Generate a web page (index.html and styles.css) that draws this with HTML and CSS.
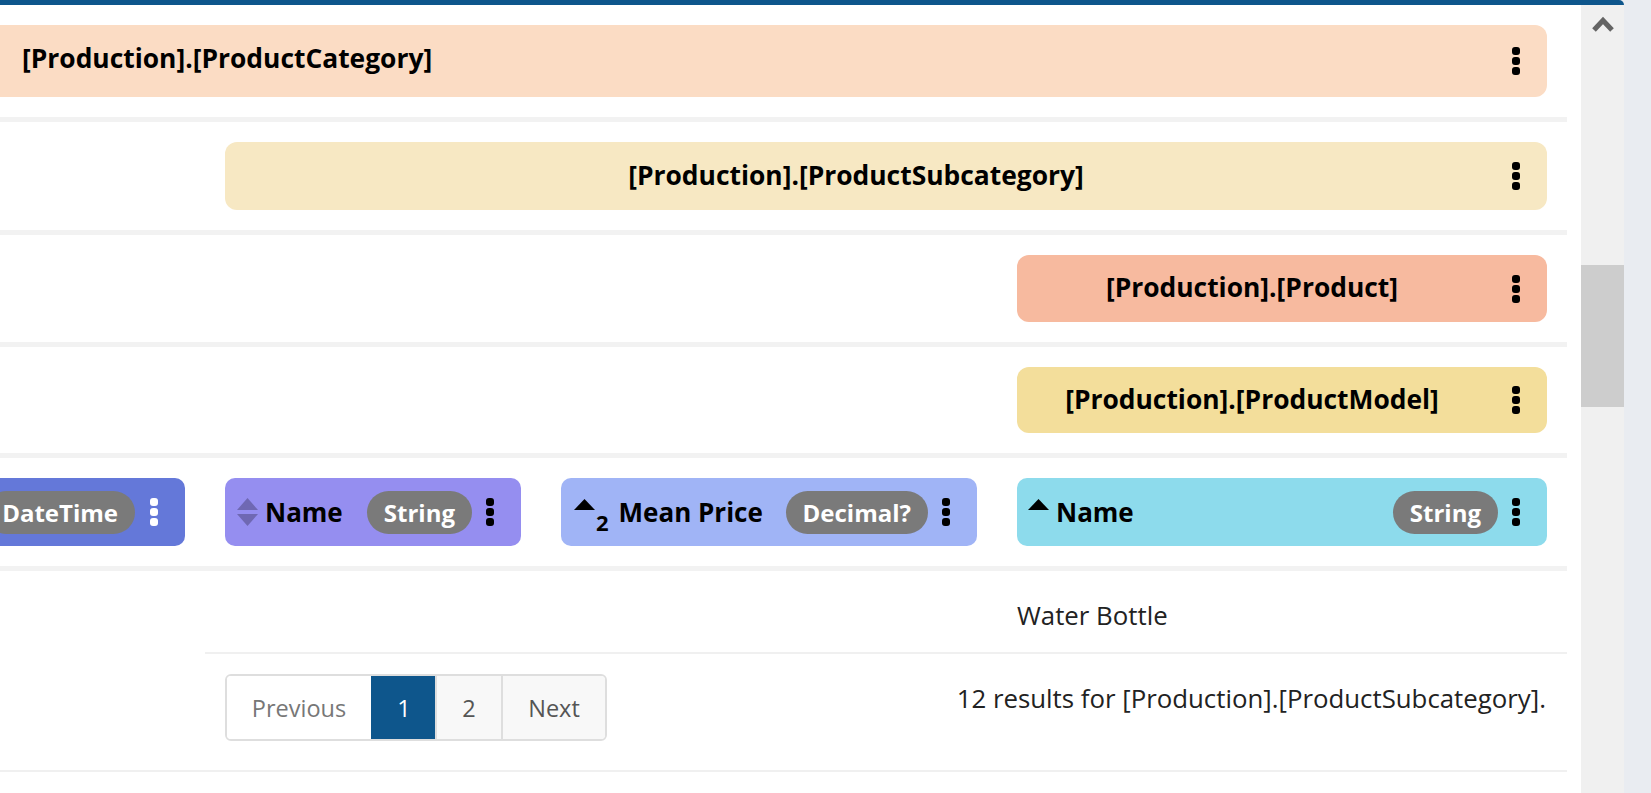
FILE: index.html
```html
<!DOCTYPE html>
<html>
<head>
<meta charset="utf-8">
<link rel="stylesheet" href="styles.css">
</head>
<body>
<div class="window">
  <div class="content">
    <div class="row">
      <div class="bar bar-cat span-all">
        <span class="bar-title left">[Production].[ProductCategory]</span>
        <svg class="kebab" width="8" height="28" viewBox="0 0 8 28"><rect x="0" y="0" width="8" height="8" rx="3"/><rect x="0" y="10" width="8" height="8" rx="3"/><rect x="0" y="20" width="8" height="8" rx="3"/></svg>
      </div>
    </div>
    <div class="row">
      <div class="bar bar-sub span-from2">
        <span class="bar-title">[Production].[ProductSubcategory]</span>
        <svg class="kebab" width="8" height="28" viewBox="0 0 8 28"><rect x="0" y="0" width="8" height="8" rx="3"/><rect x="0" y="10" width="8" height="8" rx="3"/><rect x="0" y="20" width="8" height="8" rx="3"/></svg>
      </div>
    </div>
    <div class="row">
      <div class="bar bar-prod span-last">
        <span class="bar-title">[Production].[Product]</span>
        <svg class="kebab" width="8" height="28" viewBox="0 0 8 28"><rect x="0" y="0" width="8" height="8" rx="3"/><rect x="0" y="10" width="8" height="8" rx="3"/><rect x="0" y="20" width="8" height="8" rx="3"/></svg>
      </div>
    </div>
    <div class="row">
      <div class="bar bar-model span-last">
        <span class="bar-title">[Production].[ProductModel]</span>
        <svg class="kebab" width="8" height="28" viewBox="0 0 8 28"><rect x="0" y="0" width="8" height="8" rx="3"/><rect x="0" y="10" width="8" height="8" rx="3"/><rect x="0" y="20" width="8" height="8" rx="3"/></svg>
      </div>
    </div>
    <div class="row">
      <div class="col-head head-date">
        <span class="pill">DateTime</span>
        <svg class="kebab white" width="8" height="28" viewBox="0 0 8 28"><rect x="0" y="0" width="8" height="8" rx="3"/><rect x="0" y="10" width="8" height="8" rx="3"/><rect x="0" y="20" width="8" height="8" rx="3"/></svg>
      </div>
      <div class="col-head head-name">
        <svg class="sort-both" width="21" height="29" viewBox="0 0 21 29"><polygon points="10.5,0 21,12 0,12"/><polygon points="0,16 21,16 10.5,28"/></svg>
        <span class="head-title">Name</span>
        <span class="pill">String</span>
        <svg class="kebab" width="8" height="28" viewBox="0 0 8 28"><rect x="0" y="0" width="8" height="8" rx="3"/><rect x="0" y="10" width="8" height="8" rx="3"/><rect x="0" y="20" width="8" height="8" rx="3"/></svg>
      </div>
      <div class="col-head head-price">
        <svg class="sort-asc" width="21" height="11" viewBox="0 0 21 11"><polygon points="10.5,0 21,11 0,11"/></svg>
        <span class="sort-order">2</span>
        <span class="head-title">Mean Price</span>
        <span class="pill">Decimal?</span>
        <svg class="kebab" width="8" height="28" viewBox="0 0 8 28"><rect x="0" y="0" width="8" height="8" rx="3"/><rect x="0" y="10" width="8" height="8" rx="3"/><rect x="0" y="20" width="8" height="8" rx="3"/></svg>
      </div>
      <div class="col-head head-pname">
        <svg class="sort-asc" width="21" height="11" viewBox="0 0 21 11"><polygon points="10.5,0 21,11 0,11"/></svg>
        <span class="head-title">Name</span>
        <span class="pill">String</span>
        <svg class="kebab" width="8" height="28" viewBox="0 0 8 28"><rect x="0" y="0" width="8" height="8" rx="3"/><rect x="0" y="10" width="8" height="8" rx="3"/><rect x="0" y="20" width="8" height="8" rx="3"/></svg>
      </div>
    </div>
    <div class="row data-row">
      <div class="cell span-last">Water Bottle</div>
    </div>
    <div class="footer-wrap">
      <div class="footer">
        <nav class="pager">
          <span class="page-item disabled">Previous</span>
          <span class="page-item active">1</span>
          <span class="page-item">2</span>
          <span class="page-item">Next</span>
        </nav>
        <span class="results">12 results for [Production].[ProductSubcategory].</span>
      </div>
    </div>
  </div>
  <div class="vscroll">
    <div class="sb-arrow">
      <svg width="22" height="18" viewBox="0 0 22 18"><polyline points="2,15 11,5.5 20,15" fill="none" stroke="#646464" stroke-width="5"/></svg>
    </div>
    <div class="sb-thumb"></div>
  </div>
</div>
</body>
</html>
```

FILE: styles.css
```css
html, body {
  margin: 0;
  padding: 0;
}
body {
  background: #e9ecf1;
  font-family: "Open Sans", "Noto Sans", sans-serif;
  color: #222;
  width: 1651px;
  height: 793px;
  overflow: hidden;
}
.window {
  width: 1624px;
  height: 788px;
  border-top: 5px solid #0e568c;
  border-top-right-radius: 5px;
  display: flex;
  background: #fff;
}
.content {
  width: 1581px;
  flex: 0 0 1581px;
  overflow: hidden;
  background: #fff;
}
.row {
  width: 1567px;
  box-sizing: border-box;
  padding: 20px 20px 20px 0;
  border-bottom: 5px solid #f2f2f2;
  display: grid;
  grid-template-columns: 185px 296px 416px 530px;
  column-gap: 40px;
}
.span-all { grid-column: 1 / -1; }
.span-from2 { grid-column: 2 / -1; }
.span-last { grid-column: 4 / 5; }

.bar {
  display: flex;
  align-items: center;
  height: 68px;
  box-sizing: border-box;
  border-radius: 12px;
  padding: 0 27px 3px 0;
  font-weight: 700;
  font-size: 26.4px;
  color: #000;
}
.bar .kebab { margin-top: 3px; }
.bar-cat {
  height: 72px;
  margin-left: -20px;
  padding-left: 42px;
  padding-bottom: 6px;
  background: #fbdcc4;
}
.bar-cat .kebab { margin-top: 6px; }
.bar-sub { background: #f7e8c3; }
.bar-prod { background: #f7ba9f; height: 67px; }
.bar-model { background: #f3de9b; height: 66px; }
.bar-title {
  flex: 1;
  text-align: center;
  margin-right: 25px;
  white-space: nowrap;
}
.bar-title.left { text-align: left; }

.kebab { flex: 0 0 auto; fill: #000; display: block; }
.kebab.white { fill: #fff; }

.col-head {
  display: flex;
  align-items: center;
  height: 68px;
  border-radius: 10px;
  padding: 0 27px 0 12px;
  box-sizing: border-box;
  font-weight: 700;
  font-size: 26px;
  color: #000;
}
.head-date {
  background: #6478d9;
  margin-left: -60px;
  justify-content: flex-end;
}
.head-date .pill { margin-right: 15px; }
.head-name { background: #958ef0; }
.head-price { background: #a0b4f6; padding-left: 13px; }
.head-pname { background: #8ddbec; padding-left: 11px; }

.head-title {
  margin-left: 7px;
  white-space: nowrap;
}
.head-price .head-title { margin-left: 10px; }
.sort-both { fill: #6f68b3; flex: 0 0 auto; display: block; }
.sort-asc {
  fill: #000;
  flex: 0 0 auto;
  display: block;
  align-self: flex-start;
  margin-top: 21px;
}
.sort-order {
  align-self: flex-end;
  font-size: 22px;
  line-height: 1;
  margin-bottom: 13px;
  margin-left: 1px;
}
.pill {
  margin-left: auto;
  margin-right: 14px;
  height: 43px;
  display: flex;
  align-items: center;
  padding: 0 17px;
  border-radius: 22px;
  background: #7a7a7a;
  color: #fff;
  font-weight: 700;
  font-size: 24px;
  white-space: nowrap;
}

.data-row {
  padding-top: 6px;
  padding-bottom: 0;
  height: 81px;
  border-bottom: none;
  align-items: center;
}
.cell {
  font-size: 25.8px;
  color: #222;
}

.footer-wrap {
  width: 1567px;
  border-bottom: 2px solid #f0f0f0;
}
.footer {
  margin-left: 205px;
  border-top: 2px solid #f0f0f0;
  display: flex;
  align-items: flex-start;
  justify-content: space-between;
  padding: 20px 21px 29px 20px;
}
.pager {
  display: flex;
  height: 67px;
  border: 2px solid #dedede;
  border-radius: 6px;
  box-sizing: border-box;
  overflow: hidden;
}
.page-item {
  display: flex;
  align-items: center;
  justify-content: center;
  font-size: 23.5px;
  color: #555;
  background: #f8f8f8;
  border-left: 2px solid #dedede;
}
.page-item:nth-child(1) { width: 144px; border-left: none; background: #fff; color: #777; }
.page-item:nth-child(2) { width: 62px; }
.page-item:nth-child(3) { width: 64px; }
.page-item:nth-child(4) { width: 102px; }
.page-item.active {
  background: #0e568c;
  color: #fff;
  border-left-color: #0e568c;
}
.results {
  font-size: 25.8px;
  color: #222;
  margin-top: 6px;
}

.vscroll {
  flex: 0 0 43px;
  background: #f0f0f0;
  display: flex;
  flex-direction: column;
  align-items: center;
}
.sb-arrow {
  height: 30px;
  padding-top: 10px;
}
.sb-arrow svg { display: block; }
.sb-thumb {
  margin-top: 220px;
  width: 43px;
  height: 142px;
  background: #cdcdcd;
}
```
